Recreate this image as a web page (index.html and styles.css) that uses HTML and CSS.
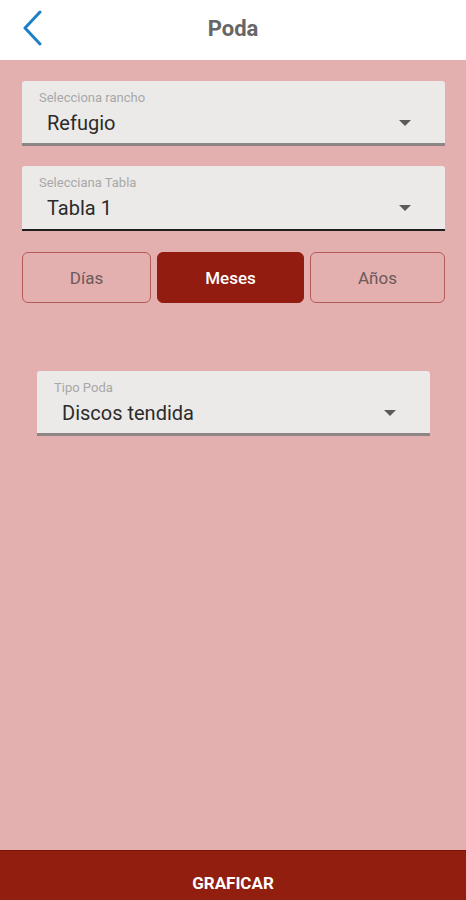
FILE: index.html
```html
<!DOCTYPE html>
<html lang="es">
<head>
  <meta charset="UTF-8">
  <title>Poda</title>
  <meta name="viewport" content="width=device-width, initial-scale=1.0">
  <link rel="stylesheet" href="styles.css">
</head>
<body>
  <header class="barra">
    <svg class="volver" width="24" height="36" viewBox="0 0 24 36">
      <path d="M19 2 L4 18 L19 34" fill="none" stroke="#1e7fc4" stroke-width="3" stroke-linecap="round" stroke-linejoin="round"/>
    </svg>
    <h1>Poda</h1>
  </header>

  <main class="contenido">
    <div class="selector">
      <span class="etiqueta">Selecciona rancho</span>
      <div class="valor">
        <span>Refugio</span>
        <span class="flecha"></span>
      </div>
    </div>

    <div class="selector activo">
      <span class="etiqueta">Selecciana Tabla</span>
      <div class="valor">
        <span>Tabla 1</span>
        <span class="flecha"></span>
      </div>
    </div>

    <div class="periodos">
      <button class="periodo">Días</button>
      <button class="periodo elegido">Meses</button>
      <button class="periodo">Años</button>
    </div>

    <div class="selector tipo">
      <span class="etiqueta">Tipo Poda</span>
      <div class="valor">
        <span>Discos tendida</span>
        <span class="flecha"></span>
      </div>
    </div>
  </main>

  <footer class="graficar">GRAFICAR</footer>
</body>
</html>
```

FILE: styles.css
```css
body {
  margin: 0;
  height: 900px;
  display: flex;
  flex-direction: column;
  font-family: Roboto, "Liberation Sans", sans-serif;
  background-color: #e3afaf;
  overflow: hidden;
}
.barra {
  height: 60px;
  background-color: #ffffff;
  display: flex;
  align-items: center;
  justify-content: center;
  position: relative;
}
.volver {
  position: absolute;
  left: 21px;
  top: 10px;
}
.barra h1 {
  margin: 0 0 4px 0;
  font-size: 22px;
  font-weight: bold;
  color: #666666;
}
.contenido {
  flex: 1;
  padding: 21px 21px 0 22px;
}
.selector {
  background-color: #ebeae8;
  border-radius: 3px 3px 0 0;
  height: 65px;
  box-sizing: border-box;
  padding: 9px 0 0 17px;
  border-bottom: 3px solid #8e8686;
  margin-bottom: 20px;
}
.selector.activo {
  border-bottom: 2px solid #1e1e1e;
  margin-bottom: 21px;
}
.etiqueta {
  display: block;
  font-size: 13px;
  color: #a8a8a8;
  line-height: 15px;
}
.valor {
  display: flex;
  align-items: center;
  justify-content: space-between;
  margin-top: 3px;
  padding: 0 34px 0 8px;
  font-size: 20px;
  color: #2b2b2b;
  line-height: 30px;
}
.flecha {
  width: 0;
  height: 0;
  border-left: 6px solid transparent;
  border-right: 6px solid transparent;
  border-top: 6px solid #5a5a5a;
}
.periodos {
  display: grid;
  grid-template-columns: 129px 147px 135px;
  gap: 6px;
}
.periodo {
  height: 51px;
  padding-top: 2px;
  border: 1px solid #b55a5a;
  border-radius: 6px;
  background-color: transparent;
  font-family: inherit;
  font-size: 17px;
  color: #6b5a5a;
}
.periodo.elegido {
  background-color: #911c0f;
  border-color: #911c0f;
  color: #ffffff;
  font-weight: 500;
}
.selector.tipo {
  margin: 68px 15px 0 15px;
}
.graficar {
  height: 50px;
  box-sizing: border-box;
  padding-top: 14px;
  background-color: #911e0e;
  border-top: 1px solid #7a1208;
  color: #ffffff;
  font-size: 17px;
  font-weight: bold;
  display: flex;
  align-items: center;
  justify-content: center;
}
```
